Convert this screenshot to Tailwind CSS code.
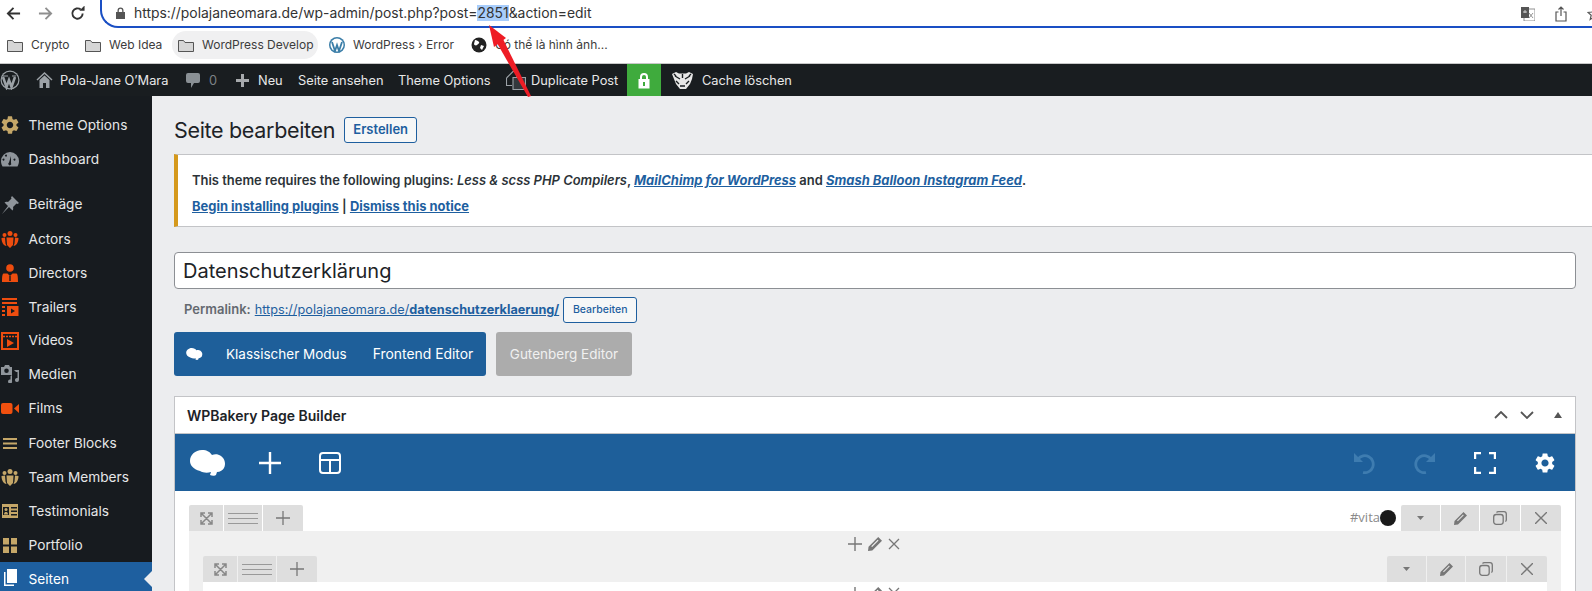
<!DOCTYPE html>
<html>
<head>
<meta charset="utf-8">
<script src="https://cdn.jsdelivr.net/npm/@tailwindcss/browser@4"></script>
</head>
<body class="w-[1592px] h-[591px] overflow-hidden relative bg-[#ecedef] font-['Inter',sans-serif] text-[#1d2327]">

<!-- browser toolbar -->
<div class="h-[28px] flex items-start bg-white">
  <div class="w-[100px] h-[26px] flex items-center pl-[6px] gap-[17px] text-[#444]">
    <svg class="w-[15px] h-[15px]" viewBox="0 0 16 16" fill="none" stroke="#333" stroke-width="2"><path d="M15 8H2M8 2 2 8l6 6"/></svg>
    <svg class="w-[15px] h-[15px]" viewBox="0 0 16 16" fill="none" stroke="#8f8f8f" stroke-width="2"><path d="M1 8h13M8 2l6 6-6 6"/></svg>
    <svg class="w-[15px] h-[15px]" viewBox="0 0 16 16" fill="none" stroke="#333" stroke-width="2"><path d="M13.500 8A5.500 5.500 0 1 1 11.500 3.800"/><path d="M10 5h5.500V-.5" fill="#333" stroke="none"/></svg>
  </div>
  <div class="flex-1 h-[26px] -mt-[8px] pt-[8px] box-content border-l-2 border-b-[2px] border-[#1a4fc4] rounded-bl-[18px] flex items-center pl-[13px] relative">
    <svg class="w-[11px] h-[12px] mr-[8px] shrink-0" viewBox="0 0 11 12" fill="#555"><path d="M2.500 5V3.500a3 3 0 0 1 6 0V5H10v7H1V5zM3.800 5h3.400V3.500a1.700 1.700 0 0 0-3.400 0z"/></svg>
    <span class="text-[13.900px] text-[#333]">https://polajaneomara.de/wp-admin/post.php?post=<span class="bg-[#a8cdfb]">2851</span>&amp;action=edit</span>
    <div class="absolute right-0 top-[14px] flex items-center gap-[20px]">
      <svg class="w-[14px] h-[14px]" viewBox="0 0 14 14"><rect x="3" y="2" width="11" height="12" fill="#fff" stroke="#777" stroke-width=".8"/><rect width="8" height="11" fill="#555"/><path d="M2 5h4M4 3v3" stroke="#ddd" stroke-width=".9"/><path d="M8 6l4 5M12 6l-4 5" stroke="#777" stroke-width=".8"/></svg>
      <svg class="w-[12px] h-[16px]" viewBox="0 0 12 16" fill="none" stroke="#555" stroke-width="1.200"><path d="M3.500 6H1v9h10V6H8.500M6 10V1M3.500 3.500 6 1l2.500 2.500"/></svg>
      <svg class="w-[14px] h-[14px] mr-[-9px]" viewBox="0 0 14 14" fill="none" stroke="#555" stroke-width="1.200"><path d="m7 1 1.800 4 4.200.4-3.200 2.800 1 4.300L7 10.200 3.200 12.500l1-4.300L1 5.400 5.200 5z"/></svg>
    </div>
  </div>
</div>

<!-- bookmarks bar -->
<div class="h-[36px] bg-white border-b-[1px] border-[#c8c8c8] flex items-center text-[12px] text-[#3c3c3c] pb-[1px] whitespace-nowrap">
  <div class="flex items-center gap-[8px] pl-[7px] w-[85px]">
    <svg class="w-[16px] h-[13px]" viewBox="0 0 16 13" fill="#d6d6d6" stroke="#555"><path d="M.5 12.500V1.500h5l1.500 2h8.500v9z"/></svg><span>Crypto</span>
  </div>
  <div class="flex items-center gap-[8px] w-[87px]">
    <svg class="w-[16px] h-[13px]" viewBox="0 0 16 13" fill="#d6d6d6" stroke="#555"><path d="M.5 12.500V1.500h5l1.500 2h8.500v9z"/></svg><span>Web Idea</span>
  </div>
  <div class="flex items-center gap-[8px] w-[146px] h-[28px] bg-[#f0f0f1] rounded-full pl-[6px]">
    <svg class="w-[16px] h-[13px]" viewBox="0 0 16 13" fill="#d6d6d6" stroke="#555"><path d="M.5 12.500V1.500h5l1.500 2h8.500v9z"/></svg><span>WordPress Develop</span>
  </div>
  <div class="flex items-center gap-[8px] w-[153px] pl-[11px]">
    <svg class="w-[16px] h-[16px]" viewBox="0 0 16 16"><circle cx="8" cy="8" r="8" fill="#3b7ea8"/><circle cx="8" cy="8" r="6.500" fill="#fff"/><path d="M3 5l3 9 2-6 2 6 3-9" fill="none" stroke="#3b7ea8" stroke-width="1.800"/></svg><span>WordPress › Error</span>
  </div>
  <div class="flex items-center gap-[8px]">
    <svg class="w-[16px] h-[16px]" viewBox="0 0 16 16"><circle cx="8" cy="8" r="7.500" fill="#222"/><path d="M4 3c2 0 3 1 4 2s-1 2-2 3-3 0-3-1zM10 8l3 1-2 4-2-2z" fill="#fff"/></svg><span>Có thể là hình ảnh...</span>
  </div>
</div>

<!-- admin bar -->
<div class="h-[32px] bg-[#191d20] flex items-center pt-[2px] text-[12.800px] text-[#e8e8e8] whitespace-nowrap relative">
  <svg class="absolute left-[0px] top-[6px] w-[20px] h-[20px]" viewBox="0 0 20 20"><circle cx="10" cy="10" r="9.500" fill="#9ca2a7"/><circle cx="10" cy="10" r="8.300" fill="#191d20"/><path d="M3 7l3.500 10L9 10l2.500 7L15 7" fill="none" stroke="#9ca2a7" stroke-width="2.500"/><path d="M3 6h5M12 6h4" stroke="#9ca2a7"/></svg>
  <svg class="absolute left-[36px] top-[7px] w-[17px] h-[18px]" viewBox="0 0 17 18"><path d="M1 9l7.500-7L16 9" fill="none" stroke="#9ca2a7" stroke-width="1.500"/><path d="M8.500 4.500 3.500 9v8h3.500v-5h3v5h3.500V9z" fill="#9ca2a7"/></svg>
  <span class="absolute left-[60px]">Pola-Jane O’Mara</span>
  <svg class="absolute left-[185px] top-[8px] w-[16px] h-[17px]" viewBox="0 0 16 17" fill="#8a9095"><path d="M3 1h10a2 2 0 0 1 2 2v6a2 2 0 0 1-2 2H9l-3 5v-5H3a2 2 0 0 1-2-2V3a2 2 0 0 1 2-2z"/></svg>
  <span class="absolute left-[209px] text-[#7d8286]">0</span>
  <svg class="absolute left-[235px] top-[9px] w-[15px] h-[15px]" viewBox="0 0 15 15" fill="#a7aaad"><path d="M6 1h3v5h5v3H9v5H6V9H1V6h5z"/></svg>
  <span class="absolute left-[258px]">Neu</span>
  <span class="absolute left-[298px]">Seite ansehen</span>
  <span class="absolute left-[398px]">Theme Options</span>
  <svg class="absolute left-[506px] top-[7px] w-[20px] h-[19px]" viewBox="0 0 20 19" fill="none" stroke="#9ca2a7" stroke-width="1.100"><path d="M.5 7 7 .5h4V6M6 14.500H.5V7"/><path d="M7 6.500h12.500v12H7z" fill="#33383c"/></svg>
  <span class="absolute left-[531px]">Duplicate Post</span>
  <div class="absolute left-[627px] top-0 w-[34px] h-[32px] bg-[#3fab3d] flex items-center justify-center">
    <svg class="w-[12px] h-[17px]" viewBox="0 0 12 17" fill="#fff"><path d="M2 7V5a4 4 0 0 1 8 0v2h1.500v9.500H.5V7zM4 7h4V5a2 2 0 0 0-4 0zM5 10v4h2v-4z" fill-rule="evenodd"/></svg>
  </div>
  <svg class="absolute left-[672px] top-[8px] w-[21px] h-[17px]" viewBox="0 0 21 17"><path d="M0 2l4-2 3 1.500h7L17 0l4 2-1 5-2 5-4 5H8l-4-5-2-5z" fill="#e8e8e8"/><path d="M3 4l5 3M18 4l-5 3M10.500 2v4M4 9l3 3M17 9l-3 3M8 14h5M2 2l2 2M19 2l-2 2" stroke="#191d20" stroke-width="1.400"/></svg>
  <span class="absolute left-[702px]">Cache löschen</span>
</div>

<div class="flex h-[495px]">
  <!-- sidebar -->
  <nav class="w-[152px] shrink-0 bg-[#171b1f] pt-[12px] text-[13.700px] text-[#e6e7e8] overflow-hidden">
    <div class="h-[34px] flex items-center gap-[9.500px] pl-[1px]">
      <svg class="w-[18px] h-[18px]" viewBox="2 2 20 20" fill="#c5a768"><path d="M19.140 12.940c.04-.3.06-.61.06-.94 0-.32-.02-.64-.07-.94l2.030-1.580a.49.49 0 0 0 .12-.61l-1.920-3.320a.488.488 0 0 0-.59-.22l-2.390.96c-.5-.38-1.030-.7-1.620-.94l-.36-2.540a.484.484 0 0 0-.48-.41h-3.840c-.24 0-.43.17-.47.41l-.36 2.540c-.59.24-1.130.57-1.620.94l-2.390-.96c-.22-.08-.47 0-.59.22L2.740 8.870c-.12.21-.08.47.12.61l2.030 1.580c-.05.3-.09.63-.09.94s.02.64.07.94l-2.030 1.580a.49.49 0 0 0-.12.61l1.920 3.320c.12.22.37.29.59.22l2.390-.96c.5.38 1.030.7 1.620.94l.36 2.540c.05.24.24.41.48.41h3.840c.24 0 .44-.17.47-.41l.36-2.540c.59-.24 1.130-.56 1.620-.94l2.390.96c.22.08.47 0 .59-.22l1.920-3.320c.12-.22.07-.47-.12-.61l-2.010-1.580zM12 15.600c-1.980 0-3.600-1.620-3.600-3.600s1.620-3.600 3.600-3.600 3.600 1.620 3.600 3.600-1.620 3.600-3.600 3.600z"/></svg>
      <span>Theme Options</span>
    </div>
    <div class="h-[34px] flex items-center gap-[9.500px] pl-[1px]">
      <svg class="w-[18px] h-[15px]" viewBox="0 0 18 15" fill="#8f959b"><path fill-rule="evenodd" d="M9 0a9 9 0 0 1 9 9c0 2-.7 4-1.500 5.500h-15C.7 13 0 11 0 9a9 9 0 0 1 9-9zM10 4 8 10.500a1.500 1.500 0 1 0 2 .5zM3.500 7.500a1 1 0 1 0 0 .1zM14.500 7.500a1 1 0 1 0 0 .1zM6 3.500a1 1 0 1 0 0 .1z"/></svg>
      <span>Dashboard</span>
    </div>
    <div class="h-[35px] mt-[11px] flex items-center gap-[9.500px] pl-[1px]">
      <svg class="w-[18px] h-[18px]" viewBox="0 0 18 18" fill="#8f959b"><path d="M11 0l7 7-1.500 1-1-.5L12 11c.5 1.500 0 3-.5 3.500L8 11 1 18l6-8-3.500-3.500C4.500 5.500 6 5.500 7 6l3.500-3.500-.5-1z"/></svg>
      <span>Beiträge</span>
    </div>
    <div class="h-[34px] flex items-center gap-[9.500px] pl-[1px]">
      <svg class="w-[18px] h-[17px]" viewBox="0 0 18 17" fill="#ee4d0f"><circle cx="9" cy="2.500" r="2.500"/><circle cx="3.500" cy="4" r="2"/><circle cx="14.500" cy="4" r="2"/><path d="M5.500 6.500h7L12 14l-3 3-3-3zM.5 7 4 6.500l.5 6 1 2.500C2.500 15 .5 11 .5 7zM17.500 7 14 6.500l-.5 6-1 2.500c3 0 5-4 5-8z"/></svg>
      <span>Actors</span>
    </div>
    <div class="h-[34px] flex items-center gap-[9.500px] pl-[1px]">
      <svg class="w-[18px] h-[18px] px-[1px]" viewBox="0 0 16 18" fill="#ee4d0f"><circle cx="8" cy="4" r="3.800"/><path d="M1.500 9.500h4L8 12l2.500-2.500h4C15.500 10 16 12 16 18H0c0-6 .5-8 1.500-8.500z"/><rect x="7.300" y="12" width="1.400" height="5" fill="#171b1f"/></svg>
      <span>Directors</span>
    </div>
    <div class="h-[34px] flex items-center gap-[9.500px] pl-[1px]">
      <svg class="w-[18px] h-[18px]" viewBox="0 0 18 18" fill="#ee4d0f"><path d="M1 0h15v2H1zM1 4h15v2H1zM1 8h3v2H1zM1 12h3v2H1zM1 16h3v2H1z"/><path fill-rule="evenodd" d="M6 8h11.500v10H6zM10 10.500v5l4-2.500z"/></svg>
      <span>Trailers</span>
    </div>
    <div class="h-[33px] flex items-center gap-[9.500px] pl-[1px]">
      <svg class="w-[18px] h-[18px]" viewBox="0 0 18 18"><rect x="1" y="1" width="16" height="16" fill="none" stroke="#ee4d0f" stroke-width="2"/><path d="M2 4.500h14" stroke="#ee4d0f" stroke-width="1.500" stroke-dasharray="2 1"/><path d="M6 7v8l7-4z" fill="#ee4d0f"/></svg>
      <span>Videos</span>
    </div>
    <div class="h-[34px] flex items-center gap-[9.500px] pl-[1px]">
      <svg class="w-[18px] h-[18px]" viewBox="0 0 18 18" fill="#8f959b"><path fill-rule="evenodd" d="M4 0h4l1 2h2v8H0V2h3zM5.500 3.500a2.300 2.300 0 1 0 0 4.600 2.300 2.300 0 0 0 0-4.600z"/><path d="M13 5h5v10a2 2 0 1 1-1.500-2V7H15zM11 10v6a2 2 0 1 1-1.500-1.500V11z"/></svg>
      <span>Medien</span>
    </div>
    <div class="h-[35px] flex items-center gap-[9.500px] pl-[1px]">
      <svg class="w-[18px] h-[11px]" viewBox="0 0 18 11" fill="#f0500f"><rect width="11.500" height="11" rx="2"/><path d="M13 5.500 18 1v9z"/></svg>
      <span>Films</span>
    </div>
    <div class="h-[34px] flex items-center gap-[9.500px] pl-[1px]">
      <svg class="w-[18px] h-[11px] px-[2px]" viewBox="0 0 14 11" fill="#c5a768"><path d="M0 0h14v2H0zM0 4.500h14v2H0zM0 9h14v2H0z"/></svg>
      <span>Footer Blocks</span>
    </div>
    <div class="h-[34px] flex items-center gap-[9.500px] pl-[1px]">
      <svg class="w-[18px] h-[17px]" viewBox="0 0 18 17" fill="#c5a768"><circle cx="9" cy="2.500" r="2.500"/><circle cx="3.500" cy="4" r="2"/><circle cx="14.500" cy="4" r="2"/><path d="M5.500 6.500h7L12 14l-3 3-3-3zM.5 7 4 6.500l.5 6 1 2.500C2.500 15 .5 11 .5 7zM17.500 7 14 6.500l-.5 6-1 2.500c3 0 5-4 5-8z"/></svg>
      <span>Team Members</span>
    </div>
    <div class="h-[34px] flex items-center gap-[9.500px] pl-[1px]">
      <svg class="w-[18px] h-[14px]" viewBox="0 0 18 14" fill="#c5a768"><path fill-rule="evenodd" d="M1 0h16v14H1zM2 3h6v8H2zM10 3v1.500h6V3zM10 6.500V8h6V6.500zM10 10v1.500h6V10z"/><circle cx="5" cy="5.500" r="1.500"/><path d="M3 10.500c0-2 1-2.500 2-2.500s2 .5 2 2.500z"/></svg>
      <span>Testimonials</span>
    </div>
    <div class="h-[34px] flex items-center gap-[9.500px] pl-[1px]">
      <svg class="w-[18px] h-[15px] px-[2px]" viewBox="0 0 14 15" fill="#c5a768"><path d="M0 0h6v6.500H0zM8 0h6v6.500H8zM0 8.500h6V15H0zM8 8.500h6V15H8z"/></svg>
      <span>Portfolio</span>
    </div>
    <div class="h-[40px] bg-[#1e5f9f] text-white flex items-start pt-[7px] gap-[9.500px] pl-[1px] relative">
      <svg class="w-[18px] h-[18px]" viewBox="0 0 18 18" fill="#fff"><path d="M6 0h10v14H6z"/><path d="M3 3h1.500v12.500H13V17H3z"/></svg>
      <span>Seiten</span>
      <div class="absolute right-0 top-[9px] border-y-[8px] border-y-transparent border-r-[8px] border-r-[#ecedef]"></div>
    </div>
  </nav>

  <!-- main -->
  <main class="flex-1 min-w-0 pl-[22px] pt-[21px]">
    <div class="flex items-center h-[26px] gap-[9px]">
      <h1 class="text-[21.500px] leading-[26px] text-[#1d2327] tracking-[-0.015em]">Seite bearbeiten</h1>
      <a class="h-[26px] w-[73px] flex items-center justify-center border border-[#1e5f9f] rounded-[3px] bg-[#f6f7f7] text-[#1e5f9f] text-[13px] font-semibold">Erstellen</a>
    </div>

    <div class="mt-[11px] h-[73px] bg-white border-l-[4px] border-[#d5991c] border-b border-b-[#c3c4c7] border-t border-t-[#c3c4c7] pl-[14px] text-[12.950px] font-semibold text-[#2c3338] flex flex-col">
      <p class="mt-[17px] leading-[16px] whitespace-nowrap">This theme requires the following plugins: <em>Less &amp; scss PHP Compilers</em>, <a class="italic underline text-[#1e5f9f] font-bold">MailChimp for WordPress</a> and <a class="italic underline text-[#1e5f9f] font-bold">Smash Balloon Instagram Feed</a>.</p>
      <p class="mt-[10px] leading-[16px] whitespace-nowrap"><a class="underline text-[#1e5f9f] font-bold">Begin installing plugins</a> | <a class="underline text-[#1e5f9f] font-bold">Dismiss this notice</a></p>
    </div>

    <div class="mt-[25px] mr-[16px] h-[37px] bg-white border border-[#8c8f94] rounded-[4px] flex items-center pl-[8px] text-[20px] text-[#1d2327]">Datenschutzerklärung</div>

    <div class="mt-[8px] h-[26px] flex items-center pl-[10px] text-[12.700px] whitespace-nowrap">
      <span class="font-semibold text-[13px] text-[#646970]">Permalink:</span>
      <a class="ml-[4px] underline text-[#1e5f9f]">https://polajaneomara.de/<span class="font-bold">datenschutzerklaerung/</span></a>
      <a class="ml-[4px] w-[74px] h-[26px] flex items-center justify-center border border-[#1e5f9f] rounded-[3px] bg-[#f6f7f7] text-[#1e5f9f] text-[10.500px] font-medium">Bearbeiten</a>
    </div>

    <div class="mt-[9px] flex gap-[10px] h-[44px] text-[13.500px] text-white">
      <div class="w-[312px] bg-[#1e5f9a] rounded-[3px] flex items-center pl-[12px]">
        <svg class="w-[17px] h-[12px]" viewBox="0 0 36 26" fill="#fff"><path d="M12 0c5 0 8 2 10 5 3-1 6-1 9 1 4 3 5 8 3 12-1 2-4 4-7 4l-1 3c-1 1-4 1-6 0l1-3c-3 1-8 1-11-1C3 19 0 15 0 11 0 5 5 0 12 0z"/></svg>
        <span class="ml-[23px]">Klassischer Modus</span>
        <span class="ml-[26px] text-[13.900px]">Frontend Editor</span>
      </div>
      <div class="w-[136px] bg-[#acacac] rounded-[3px] flex items-center justify-center text-[#f0f0f0]">Gutenberg Editor</div>
    </div>

    <!-- page builder -->
    <div class="mt-[20px] mr-[16px] h-[200px] border border-[#c3c4c7] border-b-0 bg-white">
      <div class="h-[36px] flex items-center justify-between pl-[12px] pr-[13px] text-[14px] font-semibold">
        <span>WPBakery Page Builder</span>
        <div class="flex items-center text-[#50575e]">
          <svg class="w-[14px] h-[8px]" viewBox="0 0 14 8" fill="none" stroke="#555" stroke-width="1.800"><path d="m1 7 6-6 6 6"/></svg>
          <svg class="w-[14px] h-[8px] ml-[12px]" viewBox="0 0 14 8" fill="none" stroke="#555" stroke-width="1.800"><path d="m1 1 6 6 6-6"/></svg>
          <svg class="w-[8px] h-[6px] ml-[20px]" viewBox="0 0 8 6" fill="#555"><path d="M4 0l4 6H0z"/></svg>
        </div>
      </div>
      <div class="h-[58px] bg-[#1e5f9a] border-t border-t-[#c3c4c7] flex items-center pl-[15px] pr-[20px]">
        <svg class="w-[36px] h-[26px]" viewBox="0 0 36 26" fill="#fff"><path d="M12 0c5 0 8 2 10 5 3-1 6-1 9 1 4 3 5 8 3 12-1 2-4 4-7 4l-1 3c-1 1-4 1-6 0l1-3c-3 1-8 1-11-1C3 19 0 15 0 11 0 5 5 0 12 0z"/></svg>
        <svg class="w-[22px] h-[22px] ml-[33px]" viewBox="0 0 22 22" stroke="#fff" stroke-width="2.400"><path d="M11 0v22M0 11h22"/></svg>
        <svg class="w-[22px] h-[22px] ml-[38px]" viewBox="0 0 22 22" fill="none" stroke="#fff" stroke-width="2"><rect x="1" y="1" width="20" height="20" rx="3"/><path d="M1 8h20M11 8v13"/></svg>
        <div class="ml-auto flex items-center">
          <svg class="w-[22px] h-[22px]" viewBox="0 0 22 22" fill="none" stroke="#3e7cb0" stroke-width="2.800"><path d="M5 7A8.500 8.500 0 1 1 10 20.500"/><path d="M1 1v9h9" fill="#3e7cb0" stroke="none"/></svg>
          <svg class="w-[22px] h-[22px] ml-[39px]" viewBox="0 0 22 22" fill="none" stroke="#3e7cb0" stroke-width="2.800"><path d="M17 7A8.500 8.500 0 1 0 12 20.500"/><path d="M21 1v9h-9" fill="#3e7cb0" stroke="none"/></svg>
          <svg class="w-[22px] h-[22px] ml-[38px]" viewBox="0 0 22 22" fill="none" stroke="#fff" stroke-width="2.400"><path d="M7 1H1v6M15 1h6v6M7 21H1v-6M15 21h6v-6"/></svg>
          <svg class="w-[20px] h-[20px] ml-[39px]" viewBox="2 2 20 20" fill="#fff"><path d="M19.140 12.940c.04-.3.06-.61.06-.94 0-.32-.02-.64-.07-.94l2.030-1.580a.49.49 0 0 0 .12-.61l-1.920-3.320a.488.488 0 0 0-.59-.22l-2.390.96c-.5-.38-1.030-.7-1.620-.94l-.36-2.540a.484.484 0 0 0-.48-.41h-3.840c-.24 0-.43.17-.47.41l-.36 2.540c-.59.24-1.130.57-1.620.94l-2.390-.96c-.22-.08-.47 0-.59.22L2.740 8.870c-.12.21-.08.47.12.61l2.030 1.580c-.05.3-.09.63-.09.94s.02.64.07.94l-2.030 1.580a.49.49 0 0 0-.12.61l1.920 3.320c.12.22.37.29.59.22l2.390-.96c.5.38 1.030.7 1.620.94l.36 2.540c.05.24.24.41.48.41h3.840c.24 0 .44-.17.47-.41l.36-2.540c.59-.24 1.130-.56 1.620-.94l2.390.96c.22.08.47 0 .59-.22l1.920-3.320c.12-.22.07-.47-.12-.61l-2.010-1.580zM12 15.600c-1.980 0-3.600-1.620-3.600-3.600s1.620-3.600 3.600-3.600 3.600 1.620 3.600 3.600-1.620 3.600-3.600 3.600z"/></svg>
        </div>
      </div>
      <div class="px-[14px] pt-[14px]">
        <div class="flex h-[26px] gap-[1px] items-stretch">
          <div class="w-[34px] bg-[#dedede] rounded-tl-[2px] flex items-center justify-center">
            <svg class="w-[13px] h-[13px]" viewBox="0 0 13 13" fill="none" stroke="#888" stroke-width="1.500"><path d="M1 1l11 11M12 1 1 12M1 5V1h4M8 1h4v4M1 8v4h4M8 12h4V8"/></svg>
          </div>
          <div class="w-[38px] bg-[#dedede] flex items-center justify-center">
            <svg class="w-[30px] h-[11px]" viewBox="0 0 30 11" stroke="#999"><path d="M0 .5h30M0 5.500h30M0 10.500h30"/></svg>
          </div>
          <div class="w-[40px] bg-[#dedede] rounded-tr-[2px] flex items-center justify-center">
            <svg class="w-[14px] h-[14px]" viewBox="0 0 14 14" stroke="#777" stroke-width="1.300"><path d="M7 0v14M0 7h14"/></svg>
          </div>
          <div class="ml-auto flex items-center text-[13px] text-[#8a8a8a] font-['Open_Sans',sans-serif] pr-[4px]">#vita<span class="w-[16px] h-[16px] rounded-full bg-[#1a1a1a]"></span></div>
          <div class="w-[39px] bg-[#dedede] rounded-tl-[2px] flex items-center justify-center"><svg class="w-[7px] h-[4px]" viewBox="0 0 7 4" fill="#777"><path d="M0 0h7L3.500 4z"/></svg></div>
          <div class="w-[38px] bg-[#dedede] flex items-center justify-center"><svg class="w-[13px] h-[13px]" viewBox="0 0 13 13" fill="#777"><path fill-rule="evenodd" d="M9.500 0 13 3.500 4 12.500 0 13l.5-4zM9 2.500 3 8.500l.8.8 6-6z"/></svg></div>
          <div class="w-[40px] bg-[#dedede] flex items-center justify-center"><svg class="w-[14px] h-[14px]" viewBox="0 0 14 14" fill="none" stroke="#777" stroke-width="1.300"><rect x=".7" y="3.500" width="9.500" height="9.800" rx="2.500"/><path d="M3.500 1.500 Q4 .7 5.500.7H11a2.300 2.300 0 0 1 2.300 2.300v6q0 1.200-1 1.500"/></svg></div>
          <div class="w-[40px] bg-[#dedede] rounded-tr-[2px] flex items-center justify-center"><svg class="w-[12px] h-[12px]" viewBox="0 0 12 12" stroke="#777" stroke-width="1.400"><path d="m0 0 12 12M12 0 0 12"/></svg></div>
        </div>
        <div class="bg-[#f0f0f0] px-[14px] h-[60px]">
          <div class="h-[25px] flex items-center justify-center gap-[6px] pr-[2px]">
            <svg class="w-[14px] h-[14px]" viewBox="0 0 14 14" stroke="#777" stroke-width="1.400"><path d="M7 0v14M0 7h14"/></svg>
            <svg class="w-[14px] h-[14px]" viewBox="0 0 13 13" fill="#777"><path fill-rule="evenodd" d="M9.500 0 13 3.500 4 12.500 0 13l.5-4zM9 2.500 3 8.500l.8.8 6-6z"/></svg>
            <svg class="w-[12px] h-[12px]" viewBox="0 0 12 12" stroke="#777" stroke-width="1.300"><path d="m1 1 10 10M11 1 1 11"/></svg>
          </div>
          <div class="flex h-[26px] gap-[1px] items-stretch">
            <div class="w-[34px] bg-[#dedede] rounded-tl-[2px] flex items-center justify-center">
              <svg class="w-[13px] h-[13px]" viewBox="0 0 13 13" fill="none" stroke="#888" stroke-width="1.500"><path d="M1 1l11 11M12 1 1 12M1 5V1h4M8 1h4v4M1 8v4h4M8 12h4V8"/></svg>
            </div>
            <div class="w-[38px] bg-[#dedede] flex items-center justify-center">
              <svg class="w-[30px] h-[11px]" viewBox="0 0 30 11" stroke="#999"><path d="M0 .5h30M0 5.500h30M0 10.500h30"/></svg>
            </div>
            <div class="w-[40px] bg-[#dedede] rounded-tr-[2px] flex items-center justify-center">
              <svg class="w-[14px] h-[14px]" viewBox="0 0 14 14" stroke="#777" stroke-width="1.300"><path d="M7 0v14M0 7h14"/></svg>
            </div>
            <div class="ml-auto w-[39px] bg-[#dedede] rounded-tl-[2px] flex items-center justify-center"><svg class="w-[7px] h-[4px]" viewBox="0 0 7 4" fill="#777"><path d="M0 0h7L3.500 4z"/></svg></div>
            <div class="w-[38px] bg-[#dedede] flex items-center justify-center"><svg class="w-[13px] h-[13px]" viewBox="0 0 13 13" fill="#777"><path fill-rule="evenodd" d="M9.500 0 13 3.500 4 12.500 0 13l.5-4zM9 2.500 3 8.500l.8.8 6-6z"/></svg></div>
            <div class="w-[40px] bg-[#dedede] flex items-center justify-center"><svg class="w-[14px] h-[14px]" viewBox="0 0 14 14" fill="none" stroke="#777" stroke-width="1.300"><rect x=".7" y="3.500" width="9.500" height="9.800" rx="2.500"/><path d="M3.500 1.500 Q4 .7 5.500.7H11a2.300 2.300 0 0 1 2.300 2.300v6q0 1.200-1 1.500"/></svg></div>
            <div class="w-[40px] bg-[#dedede] rounded-tr-[2px] flex items-center justify-center"><svg class="w-[12px] h-[12px]" viewBox="0 0 12 12" stroke="#777" stroke-width="1.400"><path d="m0 0 12 12M12 0 0 12"/></svg></div>
          </div>
          <div class="bg-white h-[20px] flex justify-center gap-[6px] pt-[5px] pr-[2px]">
            <svg class="w-[14px] h-[14px]" viewBox="0 0 14 14" stroke="#777" stroke-width="1.400"><path d="M7 0v14M0 7h14"/></svg>
            <svg class="w-[14px] h-[14px]" viewBox="0 0 13 13" fill="#777"><path fill-rule="evenodd" d="M9.500 0 13 3.500 4 12.500 0 13l.5-4zM9 2.500 3 8.500l.8.8 6-6z"/></svg>
            <svg class="w-[12px] h-[12px]" viewBox="0 0 12 12" stroke="#777" stroke-width="1.300"><path d="m1 1 10 10M11 1 1 11"/></svg>
          </div>
        </div>
      </div>
    </div>
  </main>
</div>

<!-- red annotation arrow -->
<svg class="absolute left-0 top-0 w-[1592px] h-[100px] pointer-events-none" viewBox="0 0 1592 100"><path d="M497 43 503 39 531 96 528 97z" fill="#ee1c25"/><path d="M489 25 506 38 494 47z" fill="#ee1c25"/></svg>
</body>
</html>
